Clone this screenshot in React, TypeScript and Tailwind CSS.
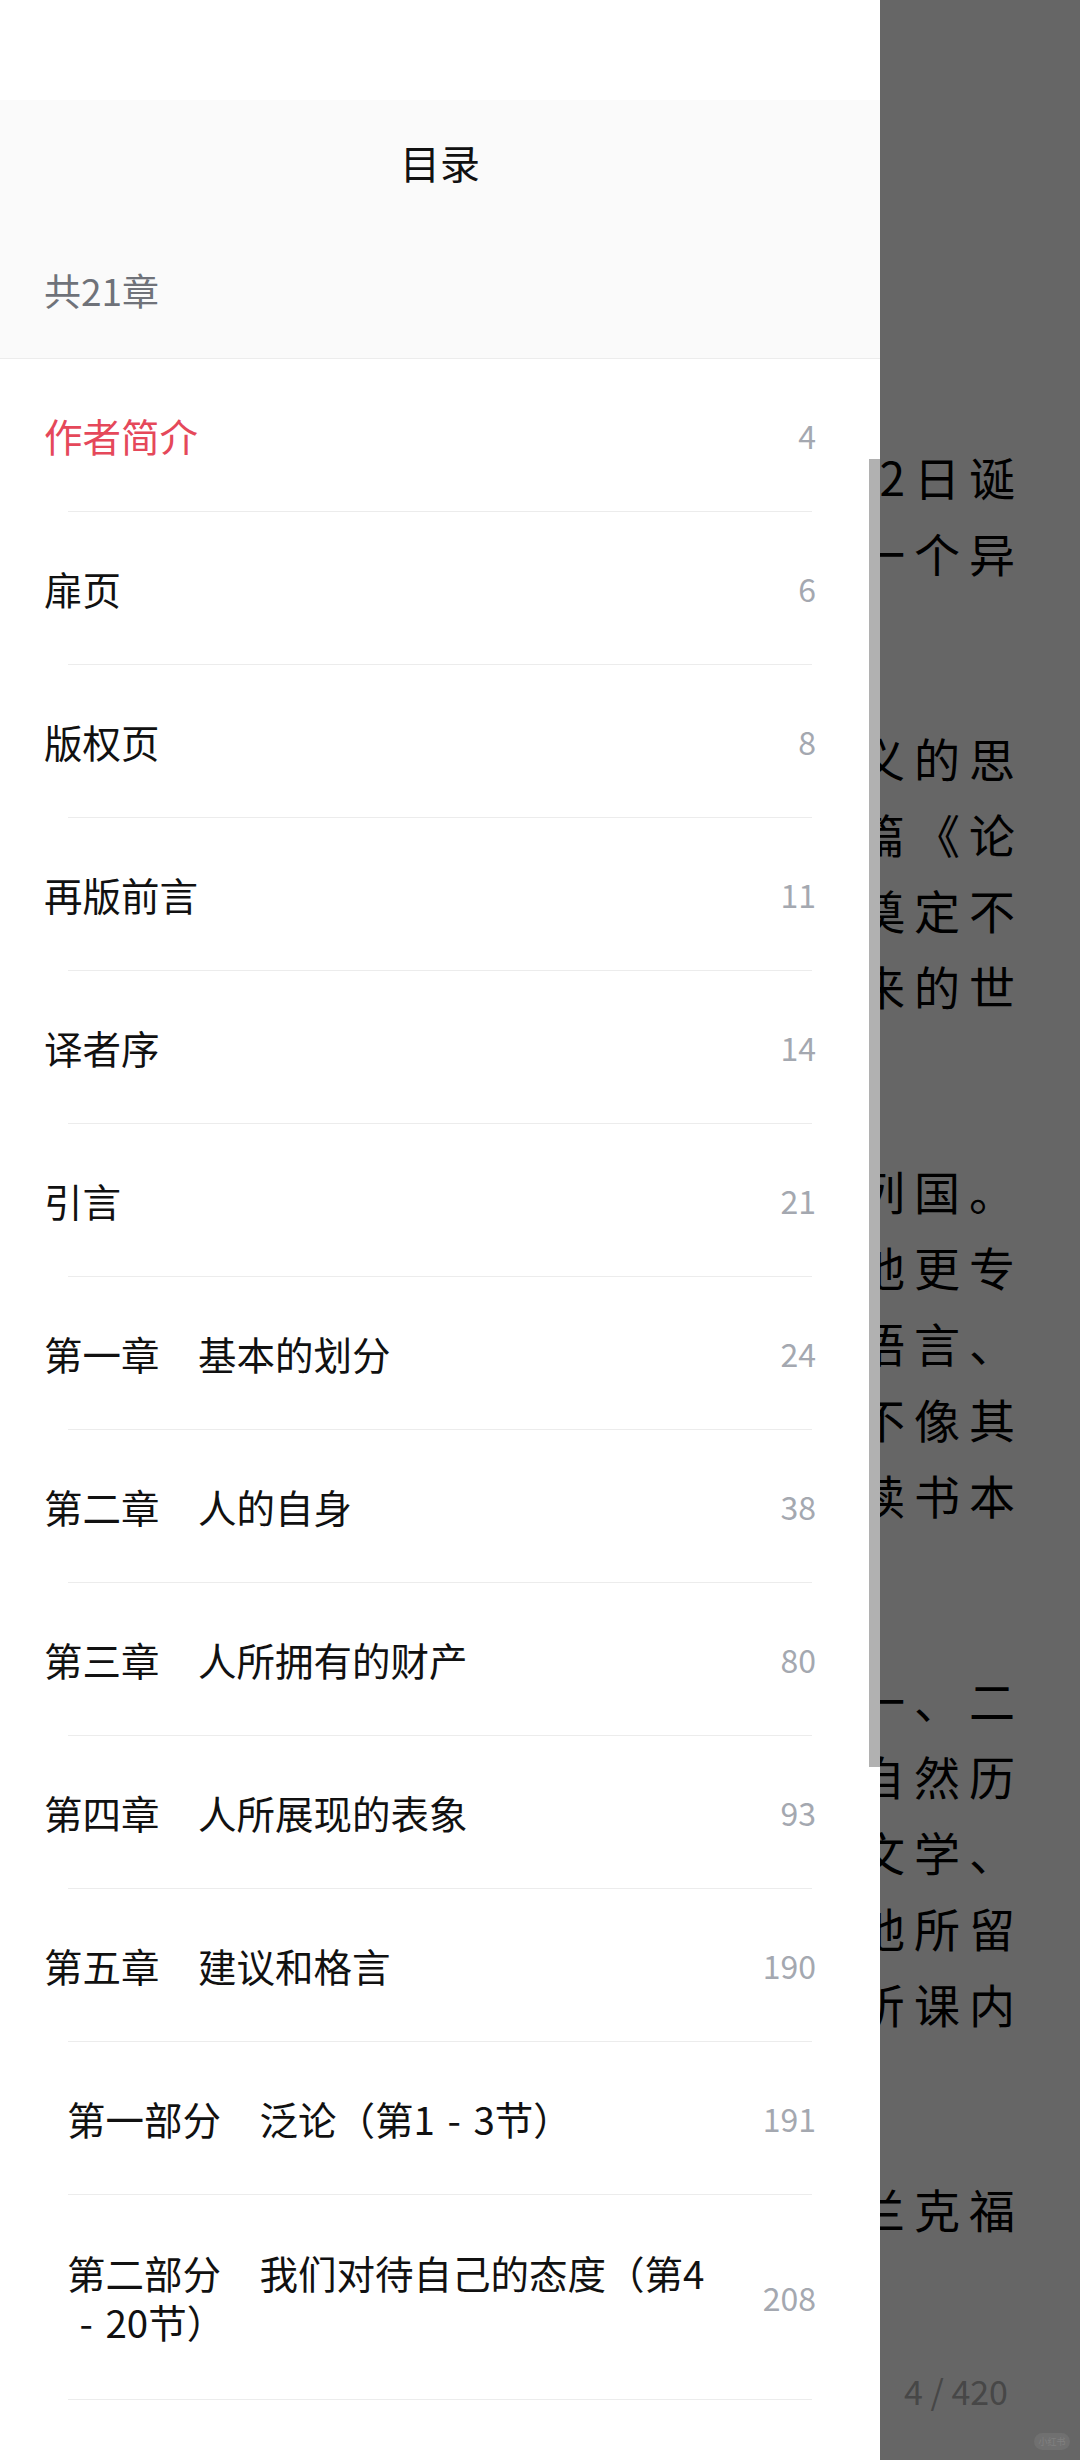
import React from 'react';

interface TocItem {
  title: string;
  page: number;
  active?: boolean;
  sub?: boolean;
  tall?: boolean;
}

const TOC: TocItem[] = [
  { title: '作者简介', page: 4, active: true },
  { title: '扉页', page: 6 },
  { title: '版权页', page: 8 },
  { title: '再版前言', page: 11 },
  { title: '译者序', page: 14 },
  { title: '引言', page: 21 },
  { title: '第一章　基本的划分', page: 24 },
  { title: '第二章　人的自身', page: 38 },
  { title: '第三章　人所拥有的财产', page: 80 },
  { title: '第四章　人所展现的表象', page: 93 },
  { title: '第五章　建议和格言', page: 190 },
  { title: '第一部分　泛论（第1－3节）', page: 191, sub: true },
  { title: '第二部分　我们对待自己的态度（第4－20节）', page: 208, sub: true, tall: true },
  { title: '第三部分　我们对待他人的态度（第21－28节）', page: 262, sub: true, tall: true },
];

// book page behind the drawer, only the line ends show
const PARAGRAPHS: string[][] = [
  ['阿图尔·叔本华于1788年2月22日诞', '生于但泽的一个富商家庭，是一个异'],
  [
    '作为唯意志论哲学的创始人和悲观主义的思',
    '想家，他的代表作是早年所写的名篇《论',
    '意志和表象的世界》，这部著作奠定不',
    '了他在哲学史上的地位，影响了后来的世',
  ],
  [
    '少年时代他随父母游历，足迹遍及欧洲列国。',
    '这些经历开阔了他的眼界，也使他更专',
    '注于观察人生，并掌握了多门语言、',
    '他的学习并不像其',
    '他同龄人那样只是死读书本',
  ],
  [
    '后来他先后进入哥廷根大学学习第一、二',
    '年的医学课程，同时研究自然历',
    '史、物理、化学以及文学、',
    '在柏林大学期间他所留',
    '下的笔记显示他常去听课内',
  ],
  ['晚年他一直定居在法兰克福'],
];

// the app draws the fullwidth dash as a short dash centred in a 1em cell
function Title({ text }: { text: string }) {
  const parts = text.split('－');
  return (
    <>
      {parts.map((part, i) => (
        <React.Fragment key={i}>
          {i > 0 && <span className="inline-block w-[1em] text-center">-</span>}
          {part}
        </React.Fragment>
      ))}
    </>
  );
}

export default function App() {
  return (
    <div className="relative w-[1080px] h-[2460px] overflow-hidden flex font-['Noto_Sans_CJK_SC',sans-serif]">
      {/* drawer */}
      <div className="w-[880px] shrink-0 bg-white flex flex-col">
        <div className="h-[100px] shrink-0 bg-white" />
        <div className="h-[259px] shrink-0 bg-[#fafafa] border-b border-[#ececec] flex flex-col">
          <div className="h-[124px] flex items-center justify-center text-[40px] text-[#111]">目录</div>
          <div className="flex-1 flex items-center pl-[44px] text-[37px] text-[#6f7279]">共21章</div>
        </div>

        {TOC.map((item, i) => (
          <div key={i} className="shrink-0">
            <div
              className={`flex items-center pr-[64px] ${item.sub ? 'pl-[67px]' : 'pl-[44px]'} ${item.tall ? 'py-[53px]' : 'h-[152px]'}`}
            >
              <div
                className={`flex-1 min-w-0 text-[38.5px] leading-[49px] ${item.active ? 'text-[#e5485a]' : 'text-[#111]'}`}
              >
                <Title text={item.title} />
              </div>
              <div className="shrink-0 ml-[30px] text-[32px] text-[#a4a8b0]">{item.page}</div>
            </div>
            <div className="mx-[68px] h-px bg-[#ececec]" />
          </div>
        ))}
      </div>

      {/* book page under the dim overlay */}
      <div className="relative flex-1 min-w-0 bg-[#666666] overflow-hidden flex flex-col pt-[438px]">
        {PARAGRAPHS.map((lines, p) => (
          <div key={p} className={p > 0 ? 'mt-[129px]' : ''}>
            {lines.map((line, j) => (
              <div
                key={j}
                className="h-[76px] flex items-center justify-end pr-[56px] whitespace-nowrap text-[46px] tracking-[9px] text-black"
              >
                {line}
              </div>
            ))}
          </div>
        ))}
        <div className="mt-[121px] pr-[72px] text-right text-[34px] leading-[48px] text-[#474747]">4 / 420</div>
        <div className="absolute right-[10px] bottom-[10px] w-[36px] h-[17px] rounded-full bg-[#707070] flex items-center justify-center text-[9px] text-[#808080]">
          小红书
        </div>
      </div>

      {/* scrollbar */}
      <div className="absolute left-[869px] top-[459px] w-[11px] h-[1308px] bg-[#b1b1b1]" />
    </div>
  );
}
